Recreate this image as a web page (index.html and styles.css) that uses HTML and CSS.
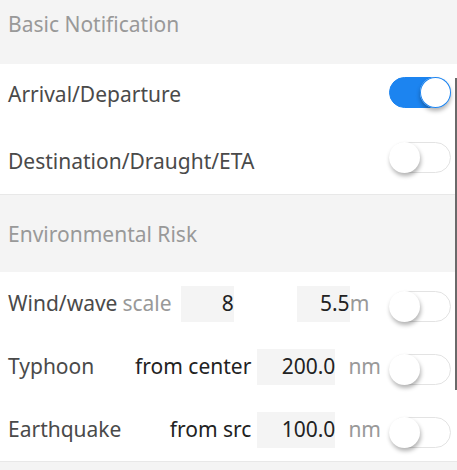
FILE: index.html
```html
<!DOCTYPE html>
<html>
<head>
<meta charset="utf-8">
<link rel="stylesheet" href="styles.css">
</head>
<body>
<div class="page">
  <div class="group-title first">Basic Notification</div>
  <div class="section basic">
    <div class="row">
      <span class="label">Arrival/Departure</span>
      <span class="toggle on"><span class="knob"></span></span>
    </div>
    <div class="row">
      <span class="label">Destination/Draught/ETA</span>
      <span class="toggle"><span class="knob"></span></span>
    </div>
  </div>
  <div class="group-title">Environmental Risk</div>
  <div class="section risk">
    <div class="row">
      <span class="label">Wind/wave</span>
      <span class="hint scale">scale</span>
      <span class="field short">8</span>
      <span class="field short wave">5.5</span>
      <span class="hint unit-m">m</span>
      <span class="toggle"><span class="knob"></span></span>
    </div>
    <div class="row">
      <span class="label">Typhoon</span>
      <span class="desc">from center</span>
      <span class="field long">200.0</span>
      <span class="hint unit-nm">nm</span>
      <span class="toggle"><span class="knob"></span></span>
    </div>
    <div class="row">
      <span class="label">Earthquake</span>
      <span class="desc">from src</span>
      <span class="field long">100.0</span>
      <span class="hint unit-nm">nm</span>
      <span class="toggle"><span class="knob"></span></span>
    </div>
  </div>
  <div class="footer"></div>
  <div class="scrollbar"></div>
</div>
</body>
</html>
```
FILE: styles.css
```css
html, body {
  margin: 0;
  padding: 0;
  background: #ffffff;
}
.page {
  position: relative;
  width: 457px;
  height: 470px;
  overflow: hidden;
  font-family: "Noto Sans", "Open Sans", sans-serif;
  font-size: 21px;
  line-height: 1.3;
  color: #4a4a4a;
}
.group-title {
  background: #f4f4f4;
  color: #999999;
  height: 78px;
  padding-left: 8px;
  display: flex;
  align-items: center;
  border-top: 1px solid #e8e8e8;
  box-sizing: border-box;
  padding-top: 3px;
}
.group-title.first {
  height: 64px;
  border-top: none;
  align-items: flex-start;
  padding-top: 11px;
}
.section {
  background: #ffffff;
}
.row {
  display: flex;
  align-items: center;
  padding: 0 6px 0 8px;
}
.basic .row {
  height: 65px;
}
.basic .row:first-child .label {
  margin-bottom: 3px;
}
.basic .toggle {
  margin-bottom: 8px;
}
.risk .row {
  height: 63px;
}
.risk .toggle {
  margin-top: 6px;
}
.label {
  color: #4a4a4a;
}
.hint {
  color: #999999;
}
.scale {
  margin-left: 5px;
  margin-right: 9px;
}
.desc {
  margin-left: auto;
  margin-right: 6px;
  color: #222222;
}
.field {
  background: #f4f4f4;
  height: 36px;
  display: flex;
  align-items: center;
  justify-content: flex-end;
  color: #222222;
  box-sizing: border-box;
}
.field.short {
  width: 53px;
}
.field.wave {
  margin-left: 63px;
}
.field.long {
  width: 78px;
}
.unit-m {
  margin-left: 0;
  margin-right: auto;
}
.unit-nm {
  margin-left: 13px;
  margin-right: 8px;
}
.toggle {
  margin-left: auto;
  flex: none;
  position: relative;
  width: 62px;
  height: 31px;
  border-radius: 16px;
  background: #ffffff;
  border: 1px solid #e3e3e3;
  box-sizing: border-box;
}
.unit-m + .toggle,
.unit-nm + .toggle {
  margin-left: 0;
}
.toggle .knob {
  position: absolute;
  top: -1px;
  left: -1px;
  width: 31px;
  height: 31px;
  border-radius: 50%;
  background: #ffffff;
  box-shadow: 1px 3px 4px rgba(0, 0, 0, 0.3);
}
.toggle.on {
  background: #1c84f0;
  border-color: #1c84f0;
}
.toggle.on .knob {
  left: auto;
  right: -1px;
  box-shadow: 0 3px 4px rgba(0, 0, 0, 0.3), inset 0 0 0 1px #1c84f0;
}
.footer {
  background: #f4f4f4;
  border-top: 1px solid #e8e8e8;
  height: 20px;
}
.scrollbar {
  position: absolute;
  left: 455px;
  top: 78px;
  width: 1.5px;
  height: 312px;
  background: #6a6a6a;
}
```
